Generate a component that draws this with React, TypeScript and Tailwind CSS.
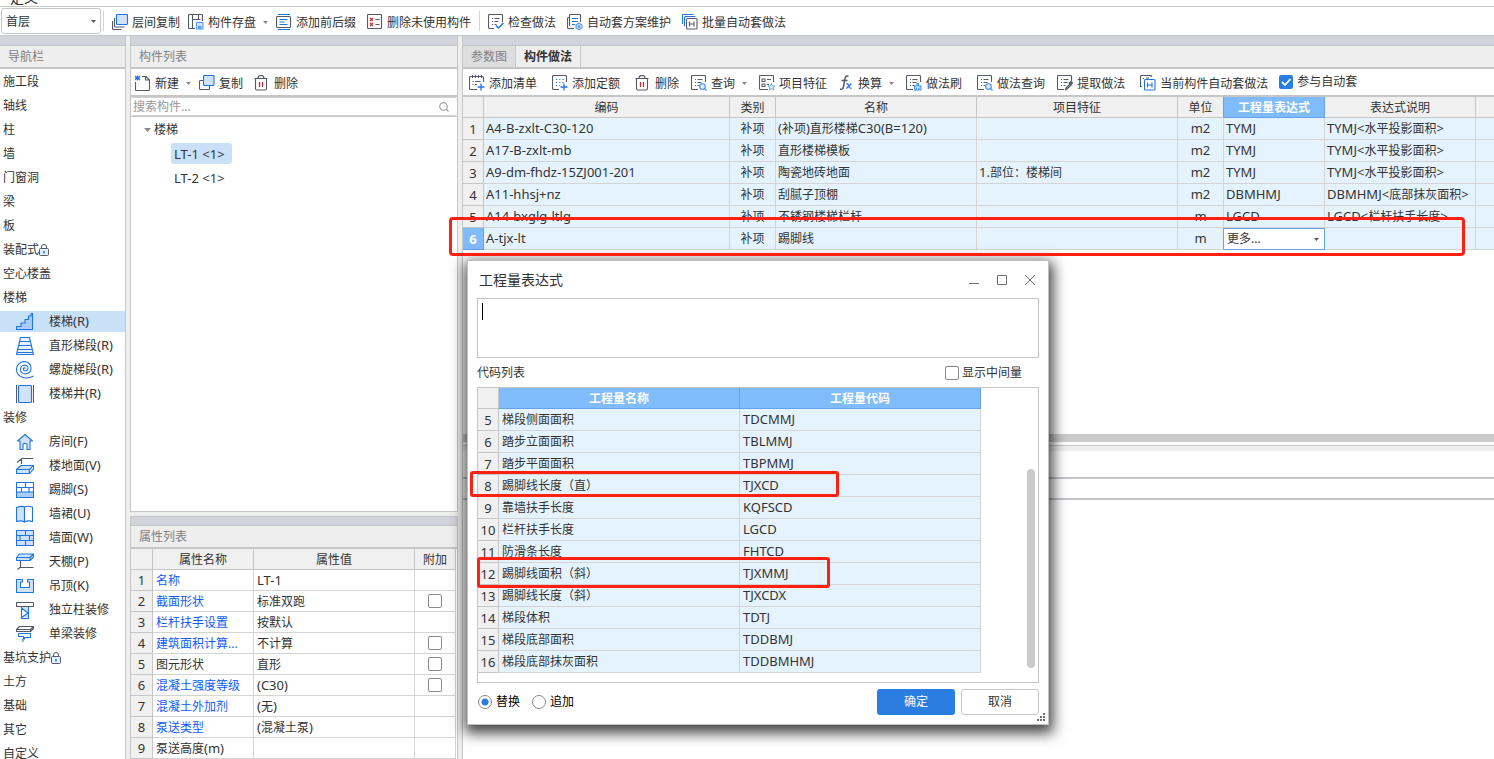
import React, { ReactNode } from "react";

/* ---------- text ---------- */

// Latin runs are set one step larger than the Chinese characters around them.
function T({ children }: { children: string }) {
  const parts = children.split(/([\x20-\x7e]+)/).filter(Boolean);
  return (
    <>
      {parts.map((p, i) =>
        /^[\x20-\x7e]+$/.test(p) && p !== "..." ? (
          <span key={i} className="text-[13px]">
            {p}
          </span>
        ) : (
          p
        ),
      )}
    </>
  );
}

/* ---------- icons ---------- */

const DARK = "#555a6b";
const BLUE = "#1f74e4";
const PALE = "#cfe2fa";
const RED = "#d3262b";

function Svg({ size = 16, children }: { size?: number; children: ReactNode }) {
  return (
    <svg
      width={size}
      height={size}
      viewBox={`0 0 ${size} ${size}`}
      fill="none"
      stroke={DARK}
      strokeWidth="1.1"
      strokeLinejoin="round"
      className="block shrink-0"
      aria-hidden="true"
    >
      {children}
    </svg>
  );
}

function Caret({ color = "#8a8a8a" }: { color?: string }) {
  return (
    <svg width="5" height="3" viewBox="0 0 5 3" className="block shrink-0" aria-hidden="true">
      <path d="M0 0h5L2.5 3z" fill={color} />
    </svg>
  );
}

const SheetLines = () => (
  <>
    <path d="M4 4.5h1M6.5 4.5h5M4 7.5h1M6.5 7.5h4M4 10.5h1M6.5 10.5h2" />
  </>
);

const ICONS: Record<string, ReactNode> = {
  stackCopy: (
    <Svg>
      <rect x="4.5" y=".5" width="11" height="10" rx="1" fill={PALE} stroke={BLUE} />
      <path d="M2.5 4v8q0 1 1 1h9M.5 7v7q0 1.500 1 1.500h8" />
    </Svg>
  ),
  save: (
    <Svg>
      <path d="M7 14.500H4.500V5.500h6v-5M.5 14.500v-13q0-1 1-1h12q1 0 1 1V7M4.500 .5v5M.5 14.500h4M10.500 5.500h2" />
      <path d="M8.500 8.500h6.500v6.500H8.500z" fill={PALE} stroke="#5c9bea" />
      <path d="M10 12h3.500v3H10z" fill="#5c9bea" stroke="none" />
    </Svg>
  ),
  prefix: (
    <Svg>
      <path d="M2 .5h12M2 15.500h12" stroke={BLUE} />
      <rect x=".5" y="2.500" width="14" height="11" rx="1" />
      <path d="M3.500 5.500h8M3.500 8h5M3.500 10.500h8" stroke={BLUE} />
    </Svg>
  ),
  removeUnused: (
    <Svg>
      <rect x=".5" y=".5" width="14" height="14" rx="1" />
      <path d="M3 4l3 3M6 4L3 7M3 9l3 3M6 9l-3 3" stroke={RED} strokeWidth="1.200" />
      <path d="M8.500 5.500h4M8.500 10.500h4" />
    </Svg>
  ),
  check: (
    <Svg>
      <path d="M6 14.500H1.500q-1 0-1-1v-12q0-1 1-1h12q1 0 1 1V8" />
      <SheetLines />
      <path d="M8 11.500l2.500 2.500 5-5" stroke={BLUE} strokeWidth="1.500" />
    </Svg>
  ),
  plan: (
    <Svg>
      <path d="M7 14.500H1.500q-1 0-1-1V4M2.500 12V1.500q0-1 1-1h9q1 0 1 1V8M.5 3.500h2" />
      <path d="M5 4.500h6M5 7.500h6M5 10.500h3" stroke={BLUE} />
      <path d="M12 9l3 2v3l-3 1.800L9 14v-3z" fill={PALE} stroke="#5c9bea" />
      <circle cx="12" cy="12.500" r="1" stroke="#5c9bea" />
    </Svg>
  ),
  batch: (
    <Svg>
      <path d="M.5 10V1.500q0-1 1-1h10M2.500 12V3.500q0-1 1-1h10" stroke={BLUE} />
      <rect x="4.500" y="4.500" width="10.500" height="10.500" rx="1" />
      <path d="M7.500 7.500v5M12 7.500v5M7.500 10h4.500" />
    </Svg>
  ),
  create: (
    <Svg>
      <path d="M.5 7v7.500q0 1 1 1h12q1 0 1-1V5L11 1.500H7M10.500 1.500V5h4" />
      <path d="M0 1l5 4M5 1L0 5M2.500 .5v5M0 3h5" stroke={BLUE} />
    </Svg>
  ),
  copy: (
    <Svg>
      <path d="M4 5.500H1.500q-1 0-1 1v7q0 1 1 1h8q1 0 1-1V11" />
      <rect x="4.500" y=".5" width="10.500" height="10" rx="1" fill={PALE} stroke={BLUE} />
    </Svg>
  ),
  trash: (
    <Svg>
      <path d="M.5 3.500h13M4 3.500q0-3 3-3t3 3M1.500 3.500v10q0 1.500 1.500 1.500h8q1.500 0 1.500-1.500v-10" />
      <path d="M5.500 7v5M8.500 7v5" stroke={RED} strokeWidth="1.300" />
    </Svg>
  ),
  addList: (
    <Svg>
      <path d="M8 14.500H1.500q-1 0-1-1v-11q0-1 1-1h12q1 0 1 1V7M3.500 0v3M6.500 0v3M9.500 0v3M12.500 0v3M3.500 6.500h1M6 6.500h5.500M3.500 9.500h1M6 9.500h2" />
      <path d="M12 8.500v7M8.500 12h7" stroke={BLUE} strokeWidth="1.300" />
    </Svg>
  ),
  addQuota: (
    <Svg>
      <path d="M7 14.500H1.500q-1 0-1-1v-12q0-1 1-1h12q1 0 1 1V7" />
      <path d="M4 4.500h8M4 7.500h8M4 10.500h4" stroke={BLUE} strokeDasharray="1.200 2" />
      <path d="M12 8.500v7M8.500 12h7" stroke={BLUE} strokeWidth="1.300" />
    </Svg>
  ),
  query: (
    <Svg>
      <path d="M7 14.500H1.500q-1 0-1-1v-12q0-1 1-1h12q1 0 1 1V7" />
      <SheetLines />
      <circle cx="11.500" cy="11.500" r="2.800" fill="#e4f0fd" stroke="#3f8cec" />
      <path d="M13.500 13.500l2 2" stroke="#3f8cec" />
    </Svg>
  ),
  feature: (
    <Svg>
      <path d="M9 14.500H1.500q-1 0-1-1v-12q0-1 1-1h12q1 0 1 1V7M3 4h3v2.500H3zM3 9h3v2.500H3zM8 4.500h4M8 9.500h2" />
      <path d="M12.500 8.500l1 2.300 2.300.2-1.800 1.500.6 2.500-2.100-1.300-2.100 1.300.6-2.500L9.200 11l2.300-.2z" fill="#e4f0fd" stroke="#5c9bea" strokeWidth=".9" />
    </Svg>
  ),
  fx: (
    <Svg>
      <path d="M10.500 1.500C8 0 7.200 2 6.800 4.500L5.500 11.500C5 14 4 14.800 2 14M3.500 5.500h6" strokeWidth="1.500" />
      <path d="M8.500 8.500c3-.5 1.500 5.500 5 5M13.500 8.500L8.500 13.500" stroke={BLUE} strokeWidth="1.300" />
    </Svg>
  ),
  brush: (
    <Svg>
      <path d="M7 14.500H1.500q-1 0-1-1v-12q0-1 1-1h12q1 0 1 1V7" />
      <SheetLines />
      <path d="M8.500 15v-4h2.500V8.500h1.500V11H15v4z" fill="#e4f0fd" stroke="#3f8cec" />
      <path d="M10.500 12.500V15M13 12.500V15" stroke="#3f8cec" />
    </Svg>
  ),
  extract: (
    <Svg>
      <path d="M7 14.500H1.500q-1 0-1-1v-12q0-1 1-1h12q1 0 1 1V6" />
      <SheetLines />
      <path d="M8.500 15l.5-2 4-4 1 1-4 4z" />
      <path d="M12 8l2-1.500 1.500 1.500L14 10z" fill={DARK} />
    </Svg>
  ),
  current: (
    <Svg>
      <path d="M2 11.500H.5V1.500q0-1 1-1h9q1 0 1 1V2M3 3.500h1M6 3h3" />
      <rect x="4.500" y="4.500" width="10.500" height="10.500" rx="1" stroke={BLUE} />
      <path d="M7.500 7.500v5M12 7.500v5M7.500 10h4.500" stroke={BLUE} />
    </Svg>
  ),
  stairs: (
    <Svg size={18}>
      <path d="M.5 16.500v-3H5V10h4V6.500h3.500V3H15V.5h1.500v16z" fill="#a9cdf8" stroke={BLUE} />
    </Svg>
  ),
  straight: (
    <Svg size={18}>
      <path d="M4.500.5h9l4 17H.5zM3.800 4.500h10.500M3 8.500h12M2 12.500h14M1 15.500h16" fill="#eaf3fe" stroke={BLUE} />
    </Svg>
  ),
  spiral: (
    <Svg size={18}>
      <path
        d="M9.500 7.500a1 1 0 0 0-2 1c0 2 4.500 2 4.500-1.500 0-4-7.500-4-7.500 1.500 0 6 10.500 6 10.500-1.500C15-2 .5-1.500.5 8.500c0 8 10 10.500 17 6.500"
        stroke={BLUE}
      />
    </Svg>
  ),
  well: (
    <Svg size={18}>
      <rect x="2.500" y=".5" width="13" height="17" rx="1" fill={PALE} stroke={BLUE} />
      <path d="M.5 0v18M17.500 0v18" />
    </Svg>
  ),
  house: (
    <Svg size={18}>
      <path d="M9 1.500L1.500 8H4v8.500h3v-5q0-1 1-1h2q1 0 1 1v5h3V8h2.500z" fill={PALE} stroke={BLUE} />
    </Svg>
  ),
  floor: (
    <Svg size={18}>
      <path d="M1 5.500L6 1.500h11M5.500 2v5" />
      <path d="M.5 12.500h13v4H.5zM.5 12.500L5 8.500h12.500l-4 4M17.500 8.500v3.500l-4 4.500" fill={PALE} stroke={BLUE} />
    </Svg>
  ),
  skirting: (
    <Svg size={18}>
      <path d="M.5 1.500h17v15H.5z" stroke={BLUE} />
      <path d="M.5 11h17v5.500H.5z" fill="#a9cdf8" stroke={BLUE} />
      <path d="M.5 6.500h17M9.500 1.500v5M5.500 6.500V11M13 6.500V11" stroke={BLUE} />
    </Svg>
  ),
  dado: (
    <Svg size={18}>
      <path d="M.5 2.500Q6 .5 8.500 2v15Q5 15 .5 16.500z" fill={PALE} stroke={BLUE} />
      <path d="M8.500 2Q12 .5 16.500 2v14.500Q12 15 8.500 17z" stroke={BLUE} />
    </Svg>
  ),
  wall: (
    <Svg size={18}>
      <path d="M.5 1.500h17v15H.5z" fill={PALE} stroke={BLUE} />
      <path d="M.5 6.500h17M.5 11.500h17M9.500 1.500v5M4 6.500v5M13.500 6.500v5M9.500 11.500v5" stroke={BLUE} />
    </Svg>
  ),
  canopy: (
    <Svg size={18}>
      <path d="M.5 4.500l3-3.500h14l-3.500 3.500v3H.5zM.5 4.500H14l3.500-3.500v3L14 7.500" fill={PALE} stroke={BLUE} />
      <path d="M4.500 8v6L1.500 16.500M4.500 14.500h13" />
    </Svg>
  ),
  ceiling: (
    <Svg size={18}>
      <path d="M.5 2.500h6V5h-2v5.500h9V5h-2V2.500h6v13H.5z" fill={PALE} stroke={BLUE} />
    </Svg>
  ),
  column: (
    <Svg size={18}>
      <path d="M.5 1.500h17v4H.5z" />
      <path d="M5.500 6v11.500h7V6M5.500 7l6.500 5-6.500 4.500" fill={PALE} stroke={BLUE} />
    </Svg>
  ),
  beam: (
    <Svg size={18}>
      <path d="M.5 4.500L3.500 1.500h14l-3 3zM.5 4.500h14v2H.5zM14.500 6.500l3-3v-2" />
      <path d="M2.500 8.500h12v4h-6V14H7v3M2.500 8.500v3h5v2" stroke={BLUE} />
    </Svg>
  ),
};

function Lock() {
  return (
    <svg width="10" height="12" viewBox="0 0 10 12" fill="none" stroke={DARK} className="block shrink-0" aria-hidden="true">
      <path d="M2.500 4.500V3a2.500 2.500 0 0 1 5 0v1.500" />
      <rect x=".5" y="4.500" width="9" height="7" rx="1" fill="#e3effc" />
      <path d="M5 7v2.500" stroke={BLUE} strokeWidth="1.500" />
    </svg>
  );
}

/* ---------- shared pieces ---------- */

function Tool({ icon, label, menu, className = "" }: { icon: string; label: string; menu?: boolean; className?: string }) {
  return (
    <button type="button" className={`flex shrink-0 items-center gap-1 pt-[2px] whitespace-nowrap ${className}`}>
      {ICONS[icon]}
      <span className="pt-[2px]">{label}</span>
      {menu && (
        <span className="pl-[3px]">
          <Caret />
        </span>
      )}
    </button>
  );
}

function Strip({ className = "" }: { className?: string }) {
  return <div className={`h-[10px] shrink-0 border-b border-[#c3c5cc] bg-[#d3d4db] ${className}`} />;
}

function PanelTitle({ children }: { children: ReactNode }) {
  return (
    <h2 className="flex h-[23px] shrink-0 items-center border-b-2 border-[#c6c6c6] bg-[#eeeeee] pt-px pl-2 text-[#808080]">
      {children}
    </h2>
  );
}

const BOX = "block size-[14px] shrink-0 appearance-none rounded-[2px] border border-[#8a8a8a] bg-white";
const TH = "h-[21px] border-r border-b border-[#c6c6c6] bg-[#f0f0f0] px-0 pt-[2px] pb-0 text-center font-normal";
const TH_ON = "h-[21px] border-r border-b border-[#62a3ec] bg-[#80bbfb] px-0 pt-[2px] pb-0 text-center font-bold text-white";
const NUM = "border-r border-b border-[#c6c6c6] bg-[#f0f0f0] px-0 pt-px pb-0 text-center font-normal";
const TD = "h-[22px] overflow-hidden border-r border-b border-[#d4d4d4] bg-[#e5f3ff] py-0 whitespace-nowrap";

/* ---------- left navigation ---------- */

type NavItem = { label: string; icon?: string; lock?: boolean; active?: boolean };

const NAV: NavItem[] = [
  { label: "施工段" },
  { label: "轴线" },
  { label: "柱" },
  { label: "墙" },
  { label: "门窗洞" },
  { label: "梁" },
  { label: "板" },
  { label: "装配式", lock: true },
  { label: "空心楼盖" },
  { label: "楼梯" },
  { label: "楼梯(R)", icon: "stairs", active: true },
  { label: "直形梯段(R)", icon: "straight" },
  { label: "螺旋梯段(R)", icon: "spiral" },
  { label: "楼梯井(R)", icon: "well" },
  { label: "装修" },
  { label: "房间(F)", icon: "house" },
  { label: "楼地面(V)", icon: "floor" },
  { label: "踢脚(S)", icon: "skirting" },
  { label: "墙裙(U)", icon: "dado" },
  { label: "墙面(W)", icon: "wall" },
  { label: "天棚(P)", icon: "canopy" },
  { label: "吊顶(K)", icon: "ceiling" },
  { label: "独立柱装修", icon: "column" },
  { label: "单梁装修", icon: "beam" },
  { label: "基坑支护", lock: true },
  { label: "土方" },
  { label: "基础" },
  { label: "其它" },
  { label: "自定义" },
];

function Navigation() {
  return (
    <nav className="flex w-[126px] shrink-0 flex-col overflow-hidden border-r border-[#c6c6c6] bg-white">
      <Strip />
      <PanelTitle>导航栏</PanelTitle>
      <ul className="pt-px">
        {NAV.map((n) => (
          <li key={n.label} className="flex h-6 items-start pt-px">
            <button
              type="button"
              className={`flex h-[21px] w-full items-center ${n.icon ? "gap-[15px] pl-4" : "pt-px pl-[3px]"} ${n.active ? "bg-[#c9e0f9]" : ""}`}
            >
              {n.icon && ICONS[n.icon]}
              <span className="whitespace-nowrap">
                <T>{n.label}</T>
              </span>
              {n.lock && <Lock />}
            </button>
          </li>
        ))}
      </ul>
    </nav>
  );
}

/* ---------- component list and properties ---------- */

type Prop = { name: string; value: string; link?: boolean; box?: boolean };

const PROPS: Prop[] = [
  { name: "名称", value: "LT-1", link: true },
  { name: "截面形状", value: "标准双跑", link: true, box: true },
  { name: "栏杆扶手设置", value: "按默认", link: true },
  { name: "建筑面积计算...", value: "不计算", link: true, box: true },
  { name: "图元形状", value: "直形", box: true },
  { name: "混凝土强度等级", value: "(C30)", link: true, box: true },
  { name: "混凝土外加剂", value: "(无)", link: true },
  { name: "泵送类型", value: "(混凝土泵)", link: true },
  { name: "泵送高度(m)", value: "" },
];

function ComponentColumn() {
  return (
    <div className="flex w-[328px] shrink-0 flex-col">
      <section className="flex min-h-0 flex-1 flex-col border-x border-b border-[#c6c6c6] bg-white">
        <Strip />
        <PanelTitle>构件列表</PanelTitle>
        <div className="flex h-7 shrink-0 items-center border-b-2 border-[#c6c6c6] pl-1">
          <Tool icon="create" label="新建" menu />
          <Tool icon="copy" label="复制" className="ml-2" />
          <Tool icon="trash" label="删除" className="ml-[11px]" />
        </div>
        <div className="flex h-[19px] shrink-0 items-center rounded-[3px] border-y border-[#d0d0d0] pr-2">
          <input
            aria-label="搜索构件"
            placeholder="搜索构件..."
            className="min-w-0 flex-1 bg-transparent pl-[2px] leading-4 outline-none placeholder:text-[#999999]"
          />
          <svg width="10" height="10" viewBox="0 0 10 10" fill="none" stroke="#a0a0a0" strokeWidth="1.200" aria-hidden="true">
            <circle cx="4.500" cy="4.500" r="3.800" />
            <path d="M7 7l2.500 2.500" />
          </svg>
        </div>
        <div className="min-h-0 flex-1 border-t border-[#c6c6c6] pt-px">
          <div className="flex h-6 items-center gap-[3px] pl-[13px]">
            <svg width="7" height="4" viewBox="0 0 7 4" aria-hidden="true">
              <path d="M0 0h7L3.500 4z" fill="#8a8a8a" />
            </svg>
            楼梯
          </div>
          <div className="flex h-6 items-start pt-px pl-10">
            <span className="flex h-[21px] w-[61px] items-center rounded-[3px] bg-[#c9e0f9] pl-[3px]">
              <T>{"LT-1 <1>"}</T>
            </span>
          </div>
          <div className="flex h-6 items-start pt-px pl-10">
            <span className="flex h-[21px] w-[61px] items-center pl-[3px]">
              <T>{"LT-2 <1>"}</T>
            </span>
          </div>
        </div>
      </section>

      <section className="mt-1 shrink-0 border-x border-[#c6c6c6] bg-white">
        <Strip className="border-t" />
        <PanelTitle>属性列表</PanelTitle>
        <table className="w-[325px] table-fixed border-separate border-spacing-0">
          <colgroup>
            <col className="w-[22px]" />
            <col className="w-[101px]" />
            <col className="w-[161px]" />
            <col className="w-[41px]" />
          </colgroup>
          <thead>
            <tr>
              <th className={TH} />
              <th className={TH}>属性名称</th>
              <th className={TH}>属性值</th>
              <th className={TH}>附加</th>
            </tr>
          </thead>
          <tbody>
            {PROPS.map((p, i) => (
              <tr key={p.name}>
                <th scope="row" className={NUM}>
                  <T>{String(i + 1)}</T>
                </th>
                <td className={`h-[21px] border-r border-b border-[#d4d4d4] px-[3px] pt-px pb-0 whitespace-nowrap ${p.link ? "text-[#0f5bff]" : ""}`}>
                  <T>{p.name}</T>
                </td>
                <td className="border-r border-b border-[#d4d4d4] px-[3px] pt-px pb-0 whitespace-nowrap">
                  <T>{p.value}</T>
                </td>
                <td className="border-r border-b border-[#d4d4d4] p-0">
                  {p.box && <input type="checkbox" aria-label={`附加 ${p.name}`} className={`${BOX} mx-auto`} />}
                </td>
              </tr>
            ))}
          </tbody>
        </table>
      </section>
    </div>
  );
}

/* ---------- practice table ---------- */

const ROWS = [
  ["A4-B-zxlt-C30-120", "(补项)直形楼梯C30(B=120)", "", "m2", "TYMJ", "TYMJ<水平投影面积>"],
  ["A17-B-zxlt-mb", "直形楼梯模板", "", "m2", "TYMJ", "TYMJ<水平投影面积>"],
  ["A9-dm-fhdz-15ZJ001-201", "陶瓷地砖地面", "1.部位：楼梯间", "m2", "TYMJ", "TYMJ<水平投影面积>"],
  ["A11-hhsj+nz", "刮腻子顶棚", "", "m2", "DBMHMJ", "DBMHMJ<底部抹灰面积>"],
  ["A14-bxglg-ltlg", "不锈钢楼梯栏杆", "", "m", "LGCD", "LGCD<栏杆扶手长度>"],
  ["A-tjx-lt", "踢脚线", "", "m", "", ""],
];

function PracticeColumn() {
  return (
    <main className="flex min-w-0 flex-1 flex-col border-l border-[#c6c6c6] bg-white">
      <Strip />
      <div role="tablist" className="flex h-[23px] shrink-0 border-b-2 border-[#c6c6c6] bg-[#eeeeee]">
        <button type="button" role="tab" aria-selected="false" className="border-r border-[#c6c6c6] bg-[#dedede] px-2 pt-px text-[#808080]">
          参数图
        </button>
        <button type="button" role="tab" aria-selected="true" className="border-r border-[#c6c6c6] px-2 pt-px font-bold">
          构件做法
        </button>
      </div>
      <div className="flex h-7 shrink-0 items-center overflow-hidden border-b-2 border-[#c6c6c6] pl-[6px]">
        <Tool icon="addList" label="添加清单" />
        <Tool icon="addQuota" label="添加定额" className="ml-[15px]" />
        <Tool icon="trash" label="删除" className="ml-[15px]" />
        <Tool icon="query" label="查询" menu className="ml-3" />
        <Tool icon="feature" label="项目特征" className="ml-3" />
        <Tool icon="fx" label="换算" menu className="ml-[11px]" />
        <Tool icon="brush" label="做法刷" className="ml-3" />
        <Tool icon="query" label="做法查询" className="ml-[15px]" />
        <Tool icon="extract" label="提取做法" className="ml-3" />
        <Tool icon="current" label="当前构件自动套做法" className="ml-[15px]" />
        <label className="ml-[11px] flex shrink-0 items-center gap-1 pb-px whitespace-nowrap">
          <span className="relative block">
            <input type="checkbox" defaultChecked className="block size-[14px] appearance-none rounded-[2px] bg-[#2a7de1]" />
            <svg width="14" height="14" viewBox="0 0 14 14" fill="none" stroke="#ffffff" strokeWidth="1.800" className="pointer-events-none absolute inset-0" aria-hidden="true">
              <path d="M3 7l3 3 5.500-6" />
            </svg>
          </span>
          参与自动套
        </label>
      </div>
      <div className="min-h-0 flex-1 overflow-hidden">
        <table className="w-full table-fixed border-separate border-spacing-0">
          <colgroup>
            <col className="w-[21px]" />
            <col className="w-[246px]" />
            <col className="w-[46px]" />
            <col className="w-[201px]" />
            <col className="w-[201px]" />
            <col className="w-[46px]" />
            <col className="w-[101px]" />
            <col className="w-[151px]" />
            <col />
          </colgroup>
          <thead>
            <tr>
              <th className={TH} />
              <th className={TH}>编码</th>
              <th className={TH}>类别</th>
              <th className={TH}>名称</th>
              <th className={TH}>项目特征</th>
              <th className={`${TH} border-r-[#62a3ec]`}>单位</th>
              <th className={TH_ON}>工程量表达式</th>
              <th className={TH}>表达式说明</th>
              <th className={`${TH} last:border-r-0`} />
            </tr>
          </thead>
          <tbody>
            {ROWS.map(([code, name, feature, unit, expr, note], i) => {
              const last = i === ROWS.length - 1;
              return (
                <tr key={code}>
                  <th
                    scope="row"
                    className={last ? "border-r border-b border-[#62a3ec] bg-[#80bbfb] px-0 pt-px pb-0 text-center font-bold text-white" : NUM}
                  >
                    <T>{String(i + 1)}</T>
                  </th>
                  <td className={`${TD} px-[2px]`}>
                    <T>{code}</T>
                  </td>
                  <td className={`${TD} text-center`}>补项</td>
                  <td className={`${TD} px-[2px]`}>
                    <T>{name}</T>
                  </td>
                  <td className={`${TD} px-[2px]`}>
                    <T>{feature}</T>
                  </td>
                  <td className={`${TD} text-center ${last ? "border-r-[#62a3ec]" : ""}`}>
                    <T>{unit}</T>
                  </td>
                  {last ? (
                    <td className="relative h-[22px] border-y border-r border-[#62a3ec] bg-white p-0">
                      <select aria-label="工程量表达式" className="block h-5 w-full appearance-none bg-white pl-[3px] outline-none">
                        <option>更多...</option>
                      </select>
                      <span className="pointer-events-none absolute top-[9px] right-[5px]">
                        <Caret color="#555555" />
                      </span>
                    </td>
                  ) : (
                    <td className={`${TD} px-[2px]`}>
                      <T>{expr}</T>
                    </td>
                  )}
                  <td className={`${TD} px-[2px]`}>
                    <T>{note}</T>
                  </td>
                  <td className={`${TD} last:border-r-0`} />
                </tr>
              );
            })}
          </tbody>
        </table>
      </div>
      <div className="h-2 shrink-0 bg-[#cbcbcb]" />
      <section className="mt-[3px] flex h-[314px] shrink-0 flex-col border-t border-[#c6c6c6]">
        <div className="h-[5px] bg-[#eeeeee]" />
        <div className="h-7 border-b-2 border-[#c3c7cb]" />
        <div className="h-[21px] border-b-2 border-[#c3c7cb]" />
      </section>
    </main>
  );
}

/* ---------- dialog ---------- */

const CODES: [number, string, string][] = [
  [5, "梯段侧面面积", "TDCMMJ"],
  [6, "踏步立面面积", "TBLMMJ"],
  [7, "踏步平面面积", "TBPMMJ"],
  [8, "踢脚线长度（直）", "TJXCD"],
  [9, "靠墙扶手长度", "KQFSCD"],
  [10, "栏杆扶手长度", "LGCD"],
  [11, "防滑条长度", "FHTCD"],
  [12, "踢脚线面积（斜）", "TJXMMJ"],
  [13, "踢脚线长度（斜）", "TJXCDX"],
  [14, "梯段体积", "TDTJ"],
  [15, "梯段底部面积", "TDDBMJ"],
  [16, "梯段底部抹灰面积", "TDDBMHMJ"],
];

const RADIO =
  "block size-[14px] appearance-none rounded-full border border-[#8a8a8a] bg-white checked:bg-[radial-gradient(circle,#2a7de1_3px,#ffffff_4px)]";

function ExpressionDialog() {
  return (
    <div
      role="dialog"
      aria-label="工程量表达式"
      className="absolute top-[260px] left-[467px] w-[582px] border border-[#c0c0c0] bg-white px-[9px] shadow-[1px_5px_13px_3px_rgba(0,0,0,0.75)]"
    >
      <header className="flex h-[37px] items-center justify-between pr-1 pl-[2px]">
        <h2 className="text-sm">工程量表达式</h2>
        <div className="flex gap-[18px] text-[#707070]">
          <button type="button" aria-label="最小化">
            <svg width="10" height="10" viewBox="0 0 10 10" stroke="currentColor">
              <path d="M0 8.500h10" />
            </svg>
          </button>
          <button type="button" aria-label="最大化">
            <svg width="10" height="10" viewBox="0 0 10 10" fill="none" stroke="currentColor">
              <path d="M.5.5h9v9h-9z" />
            </svg>
          </button>
          <button type="button" aria-label="关闭">
            <svg width="10" height="10" viewBox="0 0 10 10" stroke="currentColor">
              <path d="M0 0l10 10M10 0L0 10" />
            </svg>
          </button>
        </div>
      </header>

      <div className="relative">
        <textarea aria-label="表达式" className="block h-[60px] w-full resize-none border border-[#c6c6c6] p-1 outline-none" />
        <span className="absolute top-[5px] left-[5px] h-[17px] w-px bg-black" />
      </div>

      <div className="flex h-[29px] items-center justify-between pr-[17px]">
        <span>代码列表</span>
        <label className="flex items-center gap-[3px]">
          <input type="checkbox" className={BOX} />
          显示中间量
        </label>
      </div>

      <div className="relative border border-[#c6c6c6] pb-[9px]">
        <table className="w-[503px] table-fixed border-separate border-spacing-0">
          <colgroup>
            <col className="w-[21px]" />
            <col className="w-[241px]" />
            <col className="w-[241px]" />
          </colgroup>
          <thead>
            <tr>
              <th className={TH} />
              <th className={TH_ON}>工程量名称</th>
              <th className={TH_ON}>工程量代码</th>
            </tr>
          </thead>
          <tbody>
            {CODES.map(([n, name, code]) => (
              <tr key={n}>
                <th scope="row" className={NUM}>
                  <T>{String(n)}</T>
                </th>
                <td className={`${TD} px-[3px]`}>{name}</td>
                <td className={`${TD} px-[3px]`}>
                  <T>{code}</T>
                </td>
              </tr>
            ))}
          </tbody>
        </table>
        <span className="absolute top-[81px] right-[3px] h-[199px] w-2 rounded-full bg-[#cbcbcb]" />
        <span className="pointer-events-none absolute top-[83px] -left-2 h-[26px] w-[369px] rounded-[3px] border-3 border-[#ff2012]" />
        <span className="pointer-events-none absolute top-[169px] -left-px h-[31px] w-[353px] rounded-[3px] border-3 border-[#ff2012]" />
      </div>

      <footer className="flex items-center justify-between pt-[6px] pb-[9px]">
        <div className="flex gap-3 pl-px text-black">
          <label className="flex items-center gap-1">
            <input type="radio" name="mode" defaultChecked className={RADIO} />
            替换
          </label>
          <label className="flex items-center gap-1">
            <input type="radio" name="mode" className={RADIO} />
            追加
          </label>
        </div>
        <div className="flex gap-[6px]">
          <button type="button" className="h-[26px] w-[78px] rounded-[3px] bg-[#2a7de1] text-white">
            确定
          </button>
          <button type="button" className="h-[26px] w-[78px] rounded-[3px] border border-[#c6c6c6] bg-white">
            取消
          </button>
        </div>
      </footer>
      <svg width="8" height="8" viewBox="0 0 8 8" fill="#707070" className="absolute right-[3px] bottom-[3px]" aria-hidden="true">
        <path d="M6 0h2v2H6zM3 3h2v2H3zM6 3h2v2H6zM0 6h2v2H0zM3 6h2v2H3zM6 6h2v2H6z" />
      </svg>
    </div>
  );
}

/* ---------- page ---------- */

export default function App() {
  return (
    <div className="relative flex h-screen flex-col overflow-hidden bg-[#eeeeee] font-['Noto_Sans','Noto_Sans_CJK_SC',sans-serif] text-[12px] leading-4 text-[#333333]">
      <div className="flex h-[7px] shrink-0 items-end overflow-hidden border-b border-[#c3c7cb] bg-white pl-[10px] text-sm leading-4">
        <h1>定义</h1>
      </div>
      <div className="flex h-[29px] shrink-0 items-center overflow-hidden border-b border-[#c3c7cb] bg-white pl-px">
        <div className="relative w-[100px] shrink-0">
          <select aria-label="楼层" className="block h-[26px] w-full appearance-none rounded-[3px] border border-[#c6c6c6] bg-white pt-px pl-1 outline-none">
            <option>首层</option>
          </select>
          <span className="pointer-events-none absolute top-3 right-[5px]">
            <Caret color="#555555" />
          </span>
        </div>
        <span className="ml-[2px] h-5 w-px shrink-0 bg-[#d4d4d4]" />
        <Tool icon="stackCopy" label="层间复制" className="ml-2" />
        <Tool icon="save" label="构件存盘" menu className="ml-2" />
        <Tool icon="prefix" label="添加前后缀" className="ml-2" />
        <Tool icon="removeUnused" label="删除未使用构件" className="ml-[11px]" />
        <span className="ml-2 h-5 w-px shrink-0 bg-[#d4d4d4]" />
        <Tool icon="check" label="检查做法" className="ml-2" />
        <Tool icon="plan" label="自动套方案维护" className="ml-[11px]" />
        <Tool icon="batch" label="批量自动套做法" className="ml-[11px]" />
      </div>
      <div className="flex min-h-0 flex-1 gap-1">
        <Navigation />
        <ComponentColumn />
        <PracticeColumn />
      </div>
      <ExpressionDialog />
      <span className="pointer-events-none absolute top-[217px] left-[449px] h-[39px] w-[1016px] rounded-[4px] border-3 border-[#ff2012]" />
    </div>
  );
}
